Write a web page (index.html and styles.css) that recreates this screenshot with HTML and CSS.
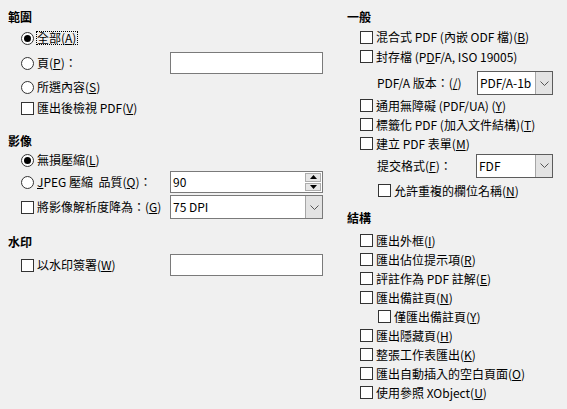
FILE: index.html
```html
<!DOCTYPE html>
<html lang="zh-Hant">
<head>
<meta charset="utf-8">
<title>PDF 選項</title>
<link rel="stylesheet" href="styles.css">
</head>
<body>
<div class="page">
  <div class="col left">
    <div class="heading first">範圍</div>
    <div class="row h24"><span class="radio on"></span><span class="label focus">全部(<u>A</u>)</span></div>
    <div class="row h26">
      <div class="lab"><span class="radio"></span><span class="label">頁(<u>P</u>)：</span></div>
      <div class="textbox"></div>
    </div>
    <div class="row h22"><span class="radio"></span><span class="label">所選內容(<u>S</u>)</span></div>
    <div class="row h20"><span class="check"></span><span class="label">匯出後檢視 PDF(<u>V</u>)</span></div>

    <div class="heading sec2">影像</div>
    <div class="row h20"><span class="radio on"></span><span class="label">無損壓縮(<u>L</u>)</span></div>
    <div class="row h24">
      <div class="lab"><span class="radio"></span><span class="label"><u>J</u>PEG 壓縮&nbsp; 品質(<u>Q</u>)：</span></div>
      <div class="spin">
        <span class="val">90</span>
        <span class="arrows">
          <span class="arr"><svg width="7" height="4" viewBox="0 0 7 4"><polygon points="3.5,0 7,4 0,4" fill="#000"/></svg></span>
          <span class="arr"><svg width="7" height="4" viewBox="0 0 7 4"><polygon points="0,0 7,0 3.5,4" fill="#000"/></svg></span>
        </span>
      </div>
    </div>
    <div class="row h26">
      <div class="lab"><span class="check"></span><span class="label">將影像解析度降為：(<u>G</u>)</span></div>
      <div class="combo wide">
        <span class="val">75 DPI</span>
        <span class="btn"><svg width="9" height="5" viewBox="0 0 9 5"><polyline points="0.5,0.5 4.5,4.5 8.5,0.5" fill="none" stroke="#555" stroke-width="1"/></svg></span>
      </div>
    </div>

    <div class="heading sec3">水印</div>
    <div class="row h28">
      <div class="lab"><span class="check"></span><span class="label">以水印簽署(<u>W</u>)</span></div>
      <div class="textbox"></div>
    </div>
  </div>

  <div class="col right">
    <div class="heading first">一般</div>
    <div class="row h20 m1"><span class="check"></span><span class="label">混合式 PDF (內嵌 ODF 檔)(<u>B</u>)</span></div>
    <div class="row h19"><span class="check"></span><span class="label">封存檔 (P<u>D</u>F/A, ISO 19005)</span></div>
    <div class="row sub pdfa">
      <span class="sublab w100">PDF/A 版本：(<u>/</u>)</span>
      <div class="combo narrow dark">
        <span class="val">PDF/A-1b</span>
        <span class="btn"><svg width="9" height="5" viewBox="0 0 9 5"><polyline points="0.5,0.5 4.5,4.5 8.5,0.5" fill="none" stroke="#555" stroke-width="1"/></svg></span>
      </div>
    </div>
    <div class="row h19"><span class="check"></span><span class="label">通用無障礙 (PDF/UA) (<u>Y</u>)</span></div>
    <div class="row h19"><span class="check"></span><span class="label">標籤化 PDF (加入文件結構)(<u>T</u>)</span></div>
    <div class="row h19"><span class="check"></span><span class="label">建立 PDF 表單(<u>M</u>)</span></div>
    <div class="row sub h25">
      <span class="sublab w99">提交格式(<u>F</u>)：</span>
      <div class="combo fdf dark">
        <span class="val">FDF</span>
        <span class="btn"><svg width="9" height="5" viewBox="0 0 9 5"><polyline points="0.5,0.5 4.5,4.5 8.5,0.5" fill="none" stroke="#555" stroke-width="1"/></svg></span>
      </div>
    </div>
    <div class="row indent h25"><span class="check"></span><span class="label">允許重複的欄位名稱(<u>N</u>)</span></div>

    <div class="heading sec4">結構</div>
    <div class="struct">
      <div class="row h19"><span class="check"></span><span class="label">匯出外框(<u>I</u>)</span></div>
      <div class="row h19"><span class="check"></span><span class="label">匯出佔位提示項(<u>R</u>)</span></div>
      <div class="row h19"><span class="check"></span><span class="label">評註作為 PDF 註解(<u>E</u>)</span></div>
      <div class="row h19"><span class="check"></span><span class="label">匯出備註頁(<u>N</u>)</span></div>
      <div class="row indent h19"><span class="check"></span><span class="label">僅匯出備註頁(<u>Y</u>)</span></div>
      <div class="row h19"><span class="check"></span><span class="label">匯出隱藏頁(<u>H</u>)</span></div>
      <div class="row h19"><span class="check"></span><span class="label">整張工作表匯出(<u>K</u>)</span></div>
      <div class="row h19"><span class="check"></span><span class="label">匯出自動插入的空白頁面(<u>O</u>)</span></div>
      <div class="row h19"><span class="check"></span><span class="label">使用參照 XObject(<u>U</u>)</span></div>
    </div>
  </div>
</div>
</body>
</html>
```

FILE: styles.css
```css
* { box-sizing: border-box; }
html, body { margin: 0; padding: 0; }
body {
  background: #f0f0f0;
  width: 567px;
  height: 409px;
  overflow: hidden;
  font-family: "Noto Sans CJK TC", "Noto Sans CJK JP", sans-serif;
  font-size: 12px;
  color: #000;
}
.page { display: flex; }
.col { display: flex; flex-direction: column; }
.left { width: 340px; padding-left: 8px; }
.right { flex: 1; padding-left: 7px; }

.heading {
  font-weight: 700;
  height: 18px;
  line-height: 18px;
}
.heading.first { margin-top: 8px; }
.heading.sec2 { margin-top: 14px; }
.heading.sec3 { margin-top: 13px; }
.heading.sec4 { margin-top: 6px; }

.row {
  display: flex;
  align-items: center;
  padding-left: 13px;
}
.h19 { height: 19px; }
.h20 { height: 20px; }
.h22 { height: 22px; }
.h24 { height: 24px; }
.h25 { height: 25px; }
.h26 { height: 26px; }
.h28 { height: 28px; }
.m1 { margin-top: 1px; }

.lab {
  width: 149px;
  display: flex;
  align-items: center;
}

.label { line-height: 16px; white-space: nowrap; }
.label u, .sublab u { text-decoration: underline; text-underline-offset: 1px; }
.label.focus {
  line-height: 12px;
  border: 1px dotted #000;
  margin-left: -1px;
  padding-right: 1px;
}

.radio, .check {
  flex: none;
  width: 13px;
  height: 13px;
  border: 1px solid #333;
  background: #fff;
  margin-right: 3px;
}
.radio {
  border-radius: 50%;
  display: flex;
  align-items: center;
  justify-content: center;
}
.radio.on::after {
  content: "";
  width: 7px;
  height: 7px;
  border-radius: 50%;
  background: #000;
}

.textbox {
  width: 153px;
  height: 22px;
  border: 1px solid #7a7a7a;
  background: #fff;
}

.spin {
  width: 153px;
  height: 22px;
  border: 1px solid #7a7a7a;
  background: #fff;
  display: flex;
}
.spin .val { flex: 1; padding-left: 2px; line-height: 20px; }
.spin .arrows {
  width: 17px;
  display: flex;
  flex-direction: column;
  padding: 1px 1px 1px 0;
  gap: 1px;
}
.spin .arr {
  flex: 1;
  border: 1px solid #adadad;
  background: #e6e6e6;
  display: flex;
  align-items: center;
  justify-content: center;
}

.combo {
  height: 24px;
  border: 1px solid #7a7a7a;
  background: #fff;
  display: flex;
}
.combo.dark { border-color: #5c5c5c; }
.combo .val { flex: 1; padding-left: 2px; line-height: 22px; white-space: nowrap; }
.combo .btn {
  width: 17px;
  background: #e3e3e3;
  border-left: 1px solid #a6a6a6;
  display: flex;
  align-items: center;
  justify-content: center;
}
.combo.wide { width: 153px; }
.combo.narrow { width: 76px; }
.combo.fdf { width: 77px; }

.row.sub { padding-left: 30px; }
.row.pdfa { height: 30px; align-items: flex-start; padding-top: 5px; }
.row.pdfa .sublab { line-height: 24px; }
.sublab { white-space: nowrap; line-height: 16px; }
.w100 { width: 100px; }
.w99 { width: 99px; }

.row.indent { padding-left: 31px; }

.struct { margin-top: 4px; display: flex; flex-direction: column; }
```
